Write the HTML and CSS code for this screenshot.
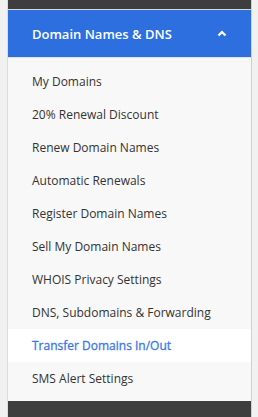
FILE: index.html
```html
<!DOCTYPE html>
<html lang="en">
<head>
  <meta charset="UTF-8" />
  <meta name="viewport" content="width=device-width, initial-scale=1.0"/>
  <title>Domain Menu</title>
  <link rel="stylesheet" href="styles.css">
</head>
<body>

  <div class="sidebar">
    <div class="top-bar"></div>

    <!-- Domain section -->
    <div class="section-head">
      <span>Domain Names &amp; DNS</span>
      <svg class="caret" width="10" height="7" viewBox="0 0 10 7">
        <path d="M1.5 5.5 L5 2 L8.5 5.5" fill="none" stroke="#fff" stroke-width="2.2"/>
      </svg>
    </div>

    <ul class="menu">
      <li><a href="#">My Domains</a></li>
      <li><a href="#">20% Renewal Discount</a></li>
      <li><a href="#">Renew Domain Names</a></li>
      <li><a href="#">Automatic Renewals</a></li>
      <li><a href="#">Register Domain Names</a></li>
      <li><a href="#">Sell My Domain Names</a></li>
      <li><a href="#">WHOIS Privacy Settings</a></li>
      <li><a href="#">DNS, Subdomains &amp; Forwarding</a></li>
      <li class="active"><a href="#">Transfer Domains In/Out</a></li>
      <li><a href="#">SMS Alert Settings</a></li>
    </ul>

    <div class="bottom-bar"></div>
  </div>

</body>
</html>
```

FILE: styles.css
```css
body {
  margin: 0;
  padding: 0;
  font-family: 'Open Sans', sans-serif;
  background: #f1f1f1;
  height: 100vh;
  overflow: hidden;
}

.sidebar {
  margin-left: 7px;
  width: 243px;
  border-left: 1px solid #dcdcdc;
  border-right: 1px solid #d0d0d0;
  background: #f8f8f8;
  height: 100%;
}

.top-bar {
  height: 9px;
  background: #3e3e3e;
  border-bottom: 1px solid #d8d8d8;
}

.section-head {
  height: 47px;
  background: #2e6fe0;
  color: #fff;
  font-weight: 600;
  font-size: 13px;
  display: flex;
  align-items: center;
  justify-content: space-between;
  padding: 0 24px 0 24px;
  border-bottom: 1px solid #e2e2e2;
}

.caret {
  margin-top: -1px;
}

.menu {
  list-style: none;
  margin: 0;
  padding: 7px 0 6px 0;
}

.menu li a {
  display: block;
  height: 33px;
  line-height: 33px;
  padding-left: 24px;
  font-size: 12px;
  color: #333;
  text-decoration: none;
}

.menu li.active a {
  background: #fff;
  color: #3a78e6;
  -webkit-text-stroke: 0.3px #3a78e6;
}

.bottom-bar {
  height: 20px;
  background: #3e3e3e;
}
```
